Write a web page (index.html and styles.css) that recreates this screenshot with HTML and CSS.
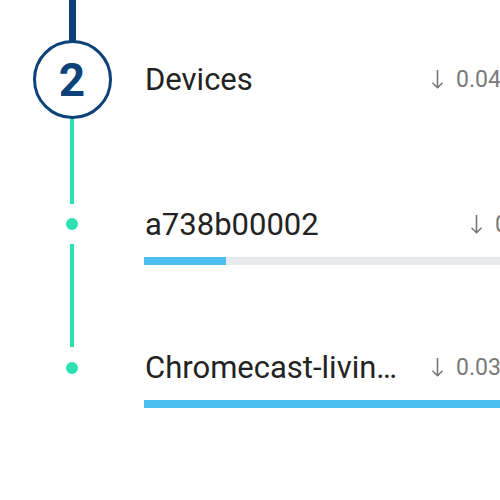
FILE: index.html
```html
<!DOCTYPE html>
<html>
<head>
<meta charset="utf-8">
<link rel="stylesheet" href="styles.css">
</head>
<body>
<div class="timeline">
  <div class="rail">
    <div class="line-top"></div>
    <div class="step">2</div>
    <div class="seg seg-a"></div>
    <div class="dot dot-a"></div>
    <div class="seg seg-b"></div>
    <div class="dot dot-b"></div>
  </div>
  <div class="content">
    <div class="header">
      <div class="name">Devices</div>
      <div class="rate">
        <svg class="arrow" viewBox="0 0 11 19" width="11" height="19"><path d="M5.5 0.5V17.8M1 13.3L5.5 17.8L10 13.3" fill="none" stroke="#777" stroke-width="1.6" stroke-linecap="round" stroke-linejoin="round"/></svg>
        <span>0.04 MB/s</span>
      </div>
    </div>
    <div class="device device-a">
      <div class="device-line">
        <div class="name">a738b00002</div>
        <div class="rate rate-short">
          <svg class="arrow" viewBox="0 0 11 19" width="11" height="19"><path d="M5.5 0.5V17.8M1 13.3L5.5 17.8L10 13.3" fill="none" stroke="#777" stroke-width="1.6" stroke-linecap="round" stroke-linejoin="round"/></svg>
          <span>0 B/s</span>
        </div>
      </div>
      <div class="bar"><div class="fill" style="width:82px"></div></div>
    </div>
    <div class="device device-b">
      <div class="device-line">
        <div class="name">Chromecast-living-room</div>
        <div class="rate">
          <svg class="arrow" viewBox="0 0 11 19" width="11" height="19"><path d="M5.5 0.5V17.8M1 13.3L5.5 17.8L10 13.3" fill="none" stroke="#777" stroke-width="1.6" stroke-linecap="round" stroke-linejoin="round"/></svg>
          <span>0.03 MB/s</span>
        </div>
      </div>
      <div class="bar"><div class="fill" style="width:100%"></div></div>
    </div>
  </div>
</div>
</body>
</html>
```
FILE: styles.css
```css
html, body {
  margin: 0;
  padding: 0;
  background: #ffffff;
  overflow: hidden;
  width: 500px;
  height: 500px;
}
body {
  font-family: Roboto, "Liberation Sans", sans-serif;
  color: #222222;
}
.timeline {
  display: flex;
  width: 580px;
}
.rail {
  width: 144px;
  flex: none;
  display: flex;
  flex-direction: column;
  align-items: center;
}
.line-top {
  width: 7px;
  height: 41px;
  background: #0d4279;
}
.step {
  width: 73px;
  height: 73px;
  border: 3px solid #0d4279;
  border-radius: 50%;
  display: flex;
  align-items: center;
  justify-content: center;
  font-size: 46px;
  font-weight: 700;
  color: #0d4279;
  margin-top: -1px;
  line-height: 1;
}
.seg {
  width: 4px;
  background: #2fe1b2;
}
.seg-a {
  height: 85px;
}
.seg-b {
  height: 103px;
  margin-top: 14px;
}
.dot {
  width: 12px;
  height: 12px;
  border-radius: 50%;
  background: #2fe1b2;
}
.dot-a {
  margin-top: 14px;
}
.dot-b {
  margin-top: 15px;
}
.content {
  flex: 1;
  min-width: 0;
  display: flex;
  flex-direction: column;
  padding-top: 40px;
}
.header {
  height: 79px;
  display: flex;
  align-items: center;
}
.name {
  flex: 1;
  min-width: 0;
  font-size: 31px;
  white-space: nowrap;
  overflow: hidden;
  text-overflow: ellipsis;
  padding-left: 1px;
  color: #232323;
}
.rate {
  flex: none;
  width: 148px;
  display: flex;
  align-items: center;
  gap: 13px;
  font-size: 23px;
  color: #7a7a7a;
  white-space: nowrap;
  margin-left: 18px;
}
.rate-short {
  width: 109px;
}
.arrow {
  flex: none;
  display: block;
}
.device-line {
  height: 34px;
  display: flex;
  align-items: center;
}
.device-a {
  margin-top: 88px;
}
.device-b {
  margin-top: 85px;
}
.bar {
  margin-top: 16px;
  height: 8px;
  background: #e8eaed;
}
.fill {
  height: 100%;
  background: #4cbff0;
}
```
